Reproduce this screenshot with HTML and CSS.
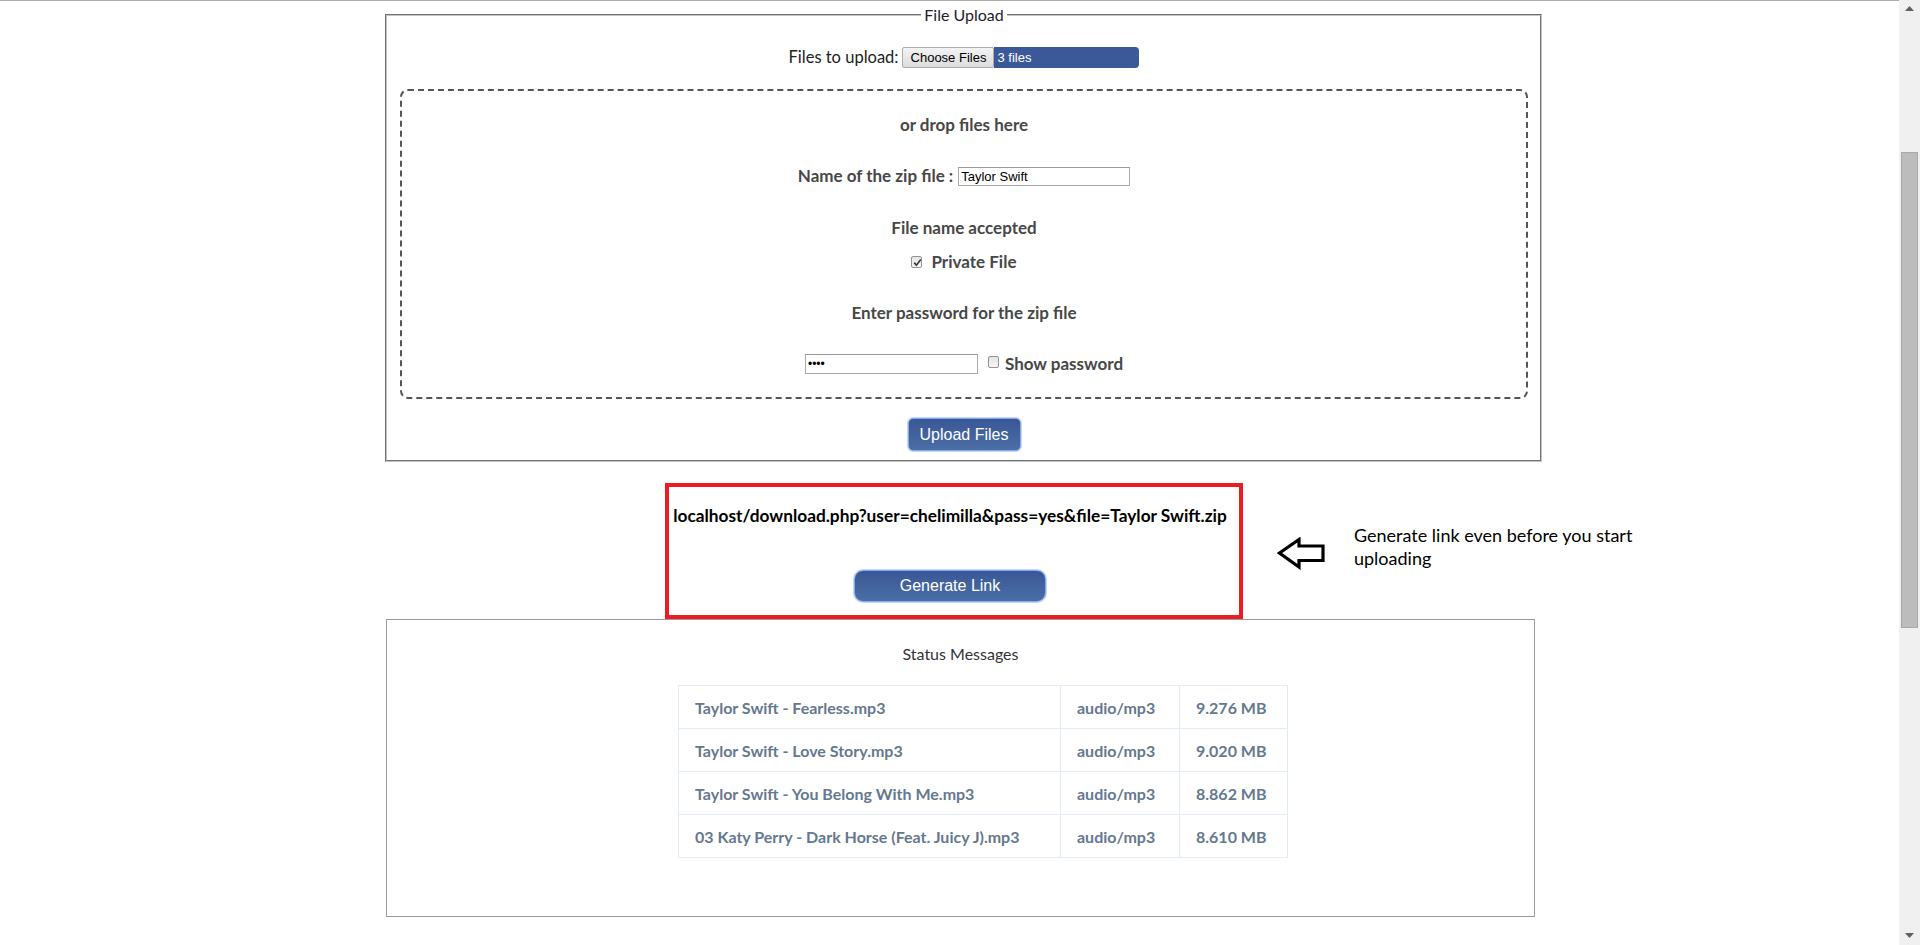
FILE: index.html
```html
<!DOCTYPE html>
<html lang="en">
<head>
<meta charset="utf-8">
<title>File Upload</title>
<link rel="stylesheet" href="styles.css">
</head>
<body>
<div class="page">
  <fieldset class="upload">
    <legend>File Upload</legend>
    <div class="file-row">
      <span class="file-label">Files to upload:</span>
      <span class="file-input"><span class="choose">Choose Files</span><span class="count">3 files</span></span>
    </div>
    <div class="dropzone">
      <p class="drop-title">or drop files here</p>
      <div class="zip-row">
        <label class="bold-label">Name of the zip file :</label>
        <input class="text-input zip" type="text" value="Taylor Swift">
      </div>
      <p class="accepted">File name accepted</p>
      <div class="private-row">
        <span class="cbox"><svg viewBox="0 0 13 13" width="13" height="13"><path d="M3.2 6.6 L5.4 9.2 L9.8 3.4" fill="none" stroke="#3a3a3a" stroke-width="1.7"/></svg></span>
        <span class="bold-label private-text">Private File</span>
      </div>
      <p class="pw-title">Enter password for the zip file</p>
      <div class="pw-row">
        <input class="text-input pw" type="password" value="1234">
        <span class="cbox cbox-pw"></span>
        <span class="bold-label show-text">Show password</span>
      </div>
    </div>
    <div class="upload-actions">
      <button class="btn upload-btn" type="button">Upload Files</button>
    </div>
  </fieldset>

  <div class="link-section">
    <div class="link-box">
      <p class="link-url">localhost/download.php?user=chelimilla&amp;pass=yes&amp;file=Taylor Swift.zip</p>
      <button class="btn gen-btn" type="button">Generate Link</button>
    </div>
    <svg class="hint-arrow" viewBox="0 0 48 33" width="48" height="33">
      <polygon points="2.5,16 22,2.5 22,9 46,9 46,23.5 22,23.5 22,30" fill="none" stroke="#000" stroke-width="3.2" stroke-linejoin="miter"/>
    </svg>
    <p class="hint-text">Generate link even before you start uploading</p>
  </div>

  <section class="status">
    <h2 class="status-title">Status Messages</h2>
    <table class="status-table">
      <colgroup><col class="c1"><col class="c2"><col class="c3"></colgroup>
      <tbody>
        <tr><td>Taylor Swift - Fearless.mp3</td><td>audio/mp3</td><td>9.276 MB</td></tr>
        <tr><td>Taylor Swift - Love Story.mp3</td><td>audio/mp3</td><td>9.020 MB</td></tr>
        <tr><td>Taylor Swift - You Belong With Me.mp3</td><td>audio/mp3</td><td>8.862 MB</td></tr>
        <tr><td>03 Katy Perry - Dark Horse (Feat. Juicy J).mp3</td><td>audio/mp3</td><td>8.610 MB</td></tr>
      </tbody>
    </table>
  </section>
</div>

<div class="scrollbar">
  <svg class="sb-arrow" viewBox="0 0 9 5" width="9" height="5"><polygon points="0,5 4.5,0 9,5" fill="#606060"/></svg>
  <div class="sb-thumb"></div>
  <svg class="sb-arrow sb-down" viewBox="0 0 9 5" width="9" height="5"><polygon points="0,0 9,0 4.5,5" fill="#606060"/></svg>
</div>
</body>
</html>
```

FILE: styles.css
```css
* { box-sizing: border-box; }

html { overflow: hidden; }

body {
  margin: 0;
  height: 945px;
  border-top: 1px solid #ababab;
  background: #fff;
  font-family: Lato, "Open Sans", sans-serif;
  color: #222;
}

p { margin: 0; }

.page {
  padding: 4px 0 0 385px;
}

/* ---------- upload fieldset ---------- */
.upload {
  width: 1157px;
  min-width: 0;
  margin: 0;
  padding: 0 12px 9px 13px;
  border: 2px groove #c4c4c4;
}

.upload legend {
  margin: 0 auto;
  padding: 0 3px;
  font-size: 16px;
  line-height: 20px;
  color: #1e1e2a;
}

.file-row {
  display: flex;
  justify-content: center;
  align-items: center;
  height: 22px;
  margin-top: 21px;
}

.file-label {
  font-size: 16.5px;
  color: #222;
  margin-right: 4px;
}

.file-input {
  display: flex;
  width: 237px;
  height: 21px;
  font-family: "Liberation Sans", Arial, sans-serif;
  font-size: 13px;
}

.choose {
  width: 92px;
  display: flex;
  align-items: center;
  justify-content: center;
  border: 1px solid #acacac;
  border-radius: 2px;
  background: linear-gradient(#f3f3f3, #dddddd);
  color: #000;
}

.count {
  flex: 1;
  display: flex;
  align-items: center;
  padding-left: 3px;
  background: #3b5998;
  color: #fff;
  border-radius: 0 4px 4px 0;
}

.dropzone {
  display: flex;
  flex-direction: column;
  align-items: center;
  height: 310px;
  margin-top: 21px;
  padding-top: 24px;
  border: 2px dashed #555;
  border-radius: 8px;
}

.drop-title,
.accepted,
.pw-title,
.bold-label {
  font-size: 17px;
  font-weight: bold;
  line-height: 20px;
  color: #474747;
}

.zip-row,
.pw-row,
.private-row {
  display: flex;
  align-items: center;
}

.zip-row { height: 22px; margin-top: 30px; }
.accepted { margin-top: 31px; }
.private-row { height: 20px; margin-top: 14px; }
.pw-title { margin-top: 31px; }
.pw-row { height: 22px; margin-top: 30px; }

.text-input {
  margin: 0;
  padding: 1px 2px;
  border: 1px solid #a9a9a9;
  border-top-color: #9a9a9a;
  font-family: "Liberation Sans", Arial, sans-serif;
  font-size: 13px;
  color: #000;
  background: #fff;
  outline: none;
}

.zip { width: 172px; height: 19px; margin-left: 5px; }
.pw { width: 173px; height: 20px; font-size: 12px; }

.cbox {
  display: inline-block;
  width: 11px;
  height: 12px;
  border: 1px solid #939393;
  border-radius: 2px;
  background: linear-gradient(#e4e4e4, #f7f7f7);
  line-height: 0;
  overflow: hidden;
}

.cbox svg { margin: -1px 0 0 -1px; }

.private-text { margin-left: 9px; }
.cbox-pw { margin-left: 10px; margin-top: -4px; }
.show-text { margin-left: 6px; }

.upload-actions {
  display: flex;
  justify-content: center;
  margin-top: 18px;
}

.btn {
  margin: 0;
  padding: 0;
  border: 1px solid #86aaf0;
  box-shadow: 0 0 0 1px #c4d6f8;
  background: linear-gradient(#3a5795, #4a6ea6);
  color: #fff;
  font-family: "Liberation Sans", Arial, sans-serif;
  font-size: 16px;
}

.upload-btn {
  width: 113px;
  height: 33px;
  margin-top: 1px;
  border-radius: 5px;
}

/* ---------- link section ---------- */
.link-section {
  display: flex;
  align-items: flex-start;
  margin-top: 21px;
}

.link-box {
  display: flex;
  flex-direction: column;
  align-items: center;
  width: 578px;
  height: 136px;
  margin-left: 280px;
  padding: 19px 8px 0 0;
  border: 4px solid #ed1c24;
}

.link-url {
  font-size: 17.3px;
  font-weight: bold;
  line-height: 20px;
  color: #000;
  white-space: nowrap;
}

.gen-btn {
  width: 192px;
  height: 32px;
  margin-top: 44px;
  border-radius: 9px;
}

.hint-arrow {
  flex: none;
  margin-left: 34px;
  margin-top: 54px;
}

.hint-text {
  width: 300px;
  margin-left: 29px;
  margin-top: 41px;
  font-size: 18px;
  line-height: 23px;
  color: #000;
}

/* ---------- status ---------- */
.status {
  width: 1149px;
  height: 298px;
  margin-left: 1px;
  padding-top: 24px;
  border: 1px solid #9a9a9a;
}

.status-title {
  margin: 0;
  font-size: 16px;
  font-weight: normal;
  line-height: 20px;
  text-align: center;
  color: #333;
}

.status-table {
  width: 609px;
  margin: 21px 0 0 291px;
  table-layout: fixed;
  border-collapse: collapse;
  border: 1px solid #e1ebf5;
}

.status-table .c1 { width: 382px; }
.status-table .c2 { width: 119px; }
.status-table .c3 { width: 108px; }

.status-table td {
  height: 43px;
  padding: 0 16px;
  border: 1px solid #e1ebf5;
  font-size: 16px;
  font-weight: bold;
  color: #64788f;
  white-space: nowrap;
}

/* ---------- fake window scrollbar ---------- */
.scrollbar {
  position: fixed;
  top: 0;
  right: 0;
  width: 21px;
  height: 945px;
  display: flex;
  flex-direction: column;
  align-items: center;
  background: #f0f0f0;
}

.sb-arrow { margin-top: 6px; flex: none; }

.sb-thumb {
  width: 17px;
  height: 476px;
  margin-top: 141px;
  background: #bcbcbc;
  border: 1px solid #a8a8a8;
}

.sb-down { margin-top: auto; margin-bottom: 7px; }
```
